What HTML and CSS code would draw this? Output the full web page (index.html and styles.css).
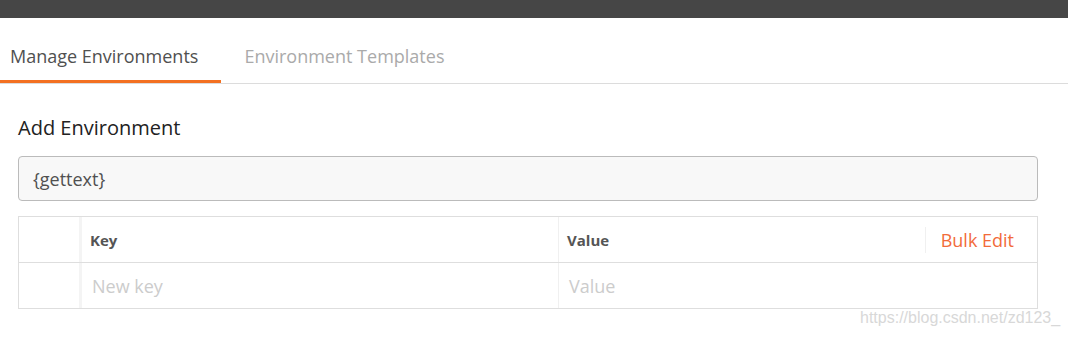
FILE: index.html
```html
<!DOCTYPE html>
<html lang="en">

<head>
    <meta charset="UTF-8">
    <meta name="viewport" content="width=device-width, initial-scale=1.0">
    <title>Manage Environments</title>
    <link rel="stylesheet" href="styles.css">
</head>

<body>
    <div class="topbar"></div>

    <div class="tabs">
        <div class="tab active">Manage Environments</div>
        <div class="tab">Environment Templates</div>
    </div>

    <div class="content">
        <h2 class="title">Add Environment</h2>
        <input class="env-name" type="text" value="{gettext}">

        <div class="vars">
            <div class="row head">
                <div class="cell check"></div>
                <div class="cell key">Key</div>
                <div class="cell value">
                    <span>Value</span>
                    <span class="bulk">Bulk Edit</span>
                </div>
            </div>
            <div class="row">
                <div class="cell check"></div>
                <div class="cell key placeholder">New key</div>
                <div class="cell value placeholder">Value</div>
            </div>
        </div>
    </div>

    <div class="watermark">https://blog.csdn.net/zd123_</div>
</body>

</html>
```

FILE: styles.css
```css
body {
    font-family: "Open Sans", "Noto Sans", sans-serif;
    margin: 0;
    padding: 0;
    background-color: #fff;
    color: #333;
}

.topbar {
    height: 18px;
    background-color: #464646;
}

.tabs {
    display: flex;
    height: 65px;
    border-bottom: 1px solid #dcdcdc;
}

.tab {
    display: flex;
    align-items: center;
    padding: 14px 23px 0 23px;
    font-size: 18px;
    color: #aaa;
    border-bottom: 3px solid transparent;
}

.tab.active {
    padding-left: 10px;
    color: #505050;
    border-bottom-color: #f37021;
}

.content {
    padding: 0 30px 0 18px;
}

.title {
    font-size: 20px;
    font-weight: 400;
    color: #222;
    margin: 30px 0 0;
    line-height: 27px;
}

.env-name {
    display: block;
    box-sizing: border-box;
    width: 100%;
    height: 45px;
    margin-top: 15px;
    padding: 0 14px;
    font-family: inherit;
    font-size: 18px;
    color: #505050;
    background-color: #f8f8f8;
    border: 1px solid #bbb;
    border-radius: 4px;
}

.vars {
    margin-top: 15px;
    border: 1px solid #dedede;
    border-bottom: none;
}

.row {
    display: grid;
    grid-template-columns: 60px 479px 1fr;
    height: 45px;
    border-bottom: 1px solid #dedede;
}

.cell {
    display: flex;
    align-items: center;
    padding-left: 8px;
}

.cell.check {
    padding: 0;
}

.cell.key {
    border-left: 3px solid #f4f4f4;
}

.cell.value {
    border-left: 1px solid #f0f0f0;
    justify-content: space-between;
}

.head .cell {
    font-size: 15px;
    font-weight: 700;
    color: #555;
}

.bulk {
    display: flex;
    align-items: center;
    height: 26px;
    padding: 0 23px 0 15px;
    border-left: 1px solid #f0f0f0;
    font-size: 18px;
    font-weight: 400;
    color: #f26b3a;
}

.placeholder {
    color: #ccc;
    font-size: 18px;
    padding-left: 10px;
}

.cell.value.placeholder {
    padding-left: 10px;
}

.watermark {
    position: absolute;
    left: 860px;
    top: 309px;
    font-family: "Liberation Sans", Arial, sans-serif;
    font-size: 16px;
    color: #d8d8d8;
}
```
